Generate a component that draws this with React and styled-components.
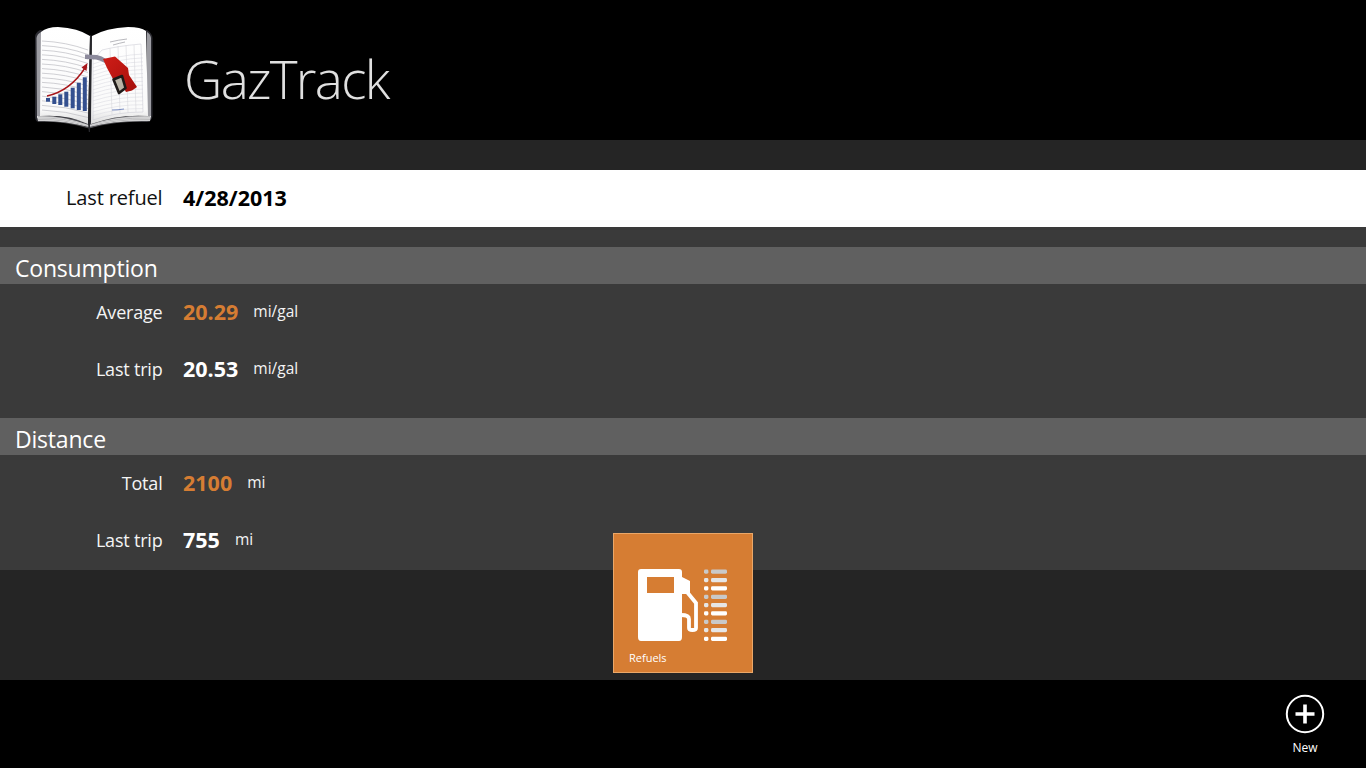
import styled, { createGlobalStyle } from 'styled-components';

const GlobalStyle = createGlobalStyle`
    html, body {
        margin: 0;
        padding: 0;
        background: #000000;
    }
    * {
        box-sizing: border-box;
    }
`;

const consumption = [
    { label: 'Average', value: '20.29', unit: 'mi/gal', accent: true, unitGap: 15 },
    { label: 'Last trip', value: '20.53', unit: 'mi/gal', unitGap: 15 },
];

const distance = [
    { label: 'Total', value: '2100', unit: 'mi', accent: true, unitGap: 15 },
    { label: 'Last trip', value: '755', unit: 'mi', unitGap: 15 },
];

function BookLogo() {
    const leftLines = Array.from({ length: 16 }, (_, i) => 41 + i * 4.6);
    const rightLines = Array.from({ length: 15 }, (_, i) => 60 + i * 3.8);
    const stack = [116.5, 118, 119.5, 121];
    const bars = [
        [46, 98, 3.7],
        [52.3, 96.7, 7.3],
        [58.3, 94.3, 10.7],
        [64.3, 91.7, 15],
        [70.7, 87.7, 20.6],
        [76.8, 82.7, 27.3],
        [82.8, 77.3, 33.7],
    ];
    return (
        <svg width="128" height="112" viewBox="30 24 128 112">
            <defs>
                <linearGradient id="pageTop" x1="0" y1="0" x2="0" y2="1">
                    <stop offset="0" stopColor="#ffffff" />
                    <stop offset="0.85" stopColor="#fafafa" />
                    <stop offset="1" stopColor="#dcdcdc" />
                </linearGradient>
                <linearGradient id="nozzle" x1="0" y1="0" x2="1" y2="1">
                    <stop offset="0" stopColor="#cf1d17" />
                    <stop offset="1" stopColor="#a50f0b" />
                </linearGradient>
            </defs>
            <path
                d="M35 37 Q35 33 40 30 L90 37 L147 30 Q152 33 152.500 38 L152.500 116 Q152 121 147 122 Q115 120 90 128 Q62 120 38 122 Q35 121 35 116 Z"
                fill="#2a2a30"
            />
            <path d="M36.500 38 Q37 34 41 32 L41 118 L37 118 Z M147 32 Q150.500 34 151 38 L151 117 L147 118 Z" fill="#9c9ca2" />
            <path d="M37 116 Q62 115 89 125 Q116 115 151 116 L150 121 Q116 120 89 127 Q62 120 38 121 Z" fill="#e8e8e8" />
            {stack.map((y) => (
                <path key={y} d={`M38 ${y} Q64 ${y - 0.5} 89 ${y + 7} Q114 ${y - 0.5} 150 ${y}`} stroke="#8e8e92" strokeWidth="0.5" fill="none" />
            ))}
            <path d="M41 32 Q47 27 58 27 Q78 28 90 36 L88 124 Q68 114 40 116 Z" fill="url(#pageTop)" />
            <path d="M92 36 Q106 28 128 27 Q141 27 146 31 L148 116 Q118 114 91 124 Z" fill="url(#pageTop)" />
            {leftLines.map((y, i) => (
                <path key={y} d={`M42 ${y} Q66 ${y + 1} 88 ${y + 9 - i * 0.1}`} stroke="#bcbcc2" strokeWidth="0.7" fill="none" />
            ))}
            {rightLines.map((y, i) => (
                <path key={y} d={`M93 ${y + 4 - i * 0.12} Q118 ${y - 5} 143 ${y - 6 + i * 0.1}`} stroke="#dcdce2" strokeWidth="0.6" fill="none" />
            ))}
            <path d="M102 50 Q118 46 141 44 L143 112 Q116 112 93 120 L93 60 Z" fill="none" stroke="#cfcfd6" strokeWidth="0.6" />
            <path d="M110 48 L112 115 M118 46 L120 114 M126 45 L128 113 M134 45 L136 112" stroke="#d6d6dc" strokeWidth="0.6" fill="none" />
            <path d="M110 42 Q118 40 127 39 M113 45 Q120 43 125 42" stroke="#9a9aa0" strokeWidth="0.7" fill="none" />
            <path d="M112 110 Q118 110 124 109" stroke="#6d82bd" strokeWidth="0.9" fill="none" />
            {bars.map(([x, y, h]) => (
                <rect key={x} x={x} y={y} width="4" height={h} fill="#34508f" />
            ))}
            <path d="M47 96 Q70 91 85 68" stroke="#a8161a" strokeWidth="1.4" fill="none" />
            <path d="M87.500 63 L86.500 71 L81.500 67.500 Z" fill="#a8161a" />
            <path d="M90 35 L91.800 36 L90 124 L90 132 L88.800 132 L88 123 Z" fill="#26262a" />
            <path d="M85 54.500 L97 55 Q102 56 106 59 L105 63 Q100 60 96 59.500 L85 59 Z" fill="#8c8a9c" />
            <path
                d="M103 59 L115 56.500 L128 68 L129 75 L137 87 L132 90.500 L126 92 L122 85 L121 76 L113 79 L107 68 Z"
                fill="url(#nozzle)"
            />
            <path d="M113.500 79.500 L122 76 L125.500 88 L119 93 Z" fill="#b9b3a6" stroke="#1e1a18" strokeWidth="2.6" strokeLinejoin="round" />
        </svg>
    );
}

function RefuelsIcon() {
    const rows = [571.5, 580, 588.3, 596.7, 605, 613.3, 621.7, 630, 638.7];
    const tones = ['#c9c9c9', '#e6e6e6', '#ffffff'];
    return (
        <svg width="90" height="73" viewBox="638 569 90 73">
            <path
                d="M641 569 H679 Q682 569 682 572 V637 Q682 641 679 641 H641 Q638 641 638 637 V572 Q638 569 641 569 Z M647 577 V593 H674 V577 Z"
                fill="#ffffff"
                fillRule="evenodd"
            />
            <path d="M681 576.500 L690 581 V594 H681 Z" fill="#ffffff" />
            <path
                d="M687 592 L696 603 V628 Q696 630 692.500 630 Q689 630 689 628 V619 Q689 615 681 615"
                fill="none"
                stroke="#ffffff"
                strokeWidth="3.8"
            />
            {rows.map((y, i) => (
                <g key={y} fill={tones[i % 3]}>
                    <rect x="704" y={y - 2} width="4.4" height="4.2" rx="1.4" />
                    <rect x="711" y={y - 2} width="16" height="4.2" rx="1.4" />
                </g>
            ))}
        </svg>
    );
}

function StatRow({ label, value, unit, accent, unitGap }) {
    return (
        <Row>
            <RowLabel>{label}</RowLabel>
            <RowValue $accent={accent}>{value}</RowValue>
            <RowUnit $gap={unitGap}>{unit}</RowUnit>
        </Row>
    );
}

function App() {
    return (
        <Page>
            <GlobalStyle />
            <Header>
                <BookLogo />
                <Title>GazTrack</Title>
            </Header>
            <Content>
                <LastRefuel>
                    <RowLabel $dark>Last refuel</RowLabel>
                    <RefuelDate>4/28/2013</RefuelDate>
                </LastRefuel>
                <Stats>
                    <SectionHead>Consumption</SectionHead>
                    <SectionBody $extra={20}>
                        {consumption.map((row) => (
                            <StatRow key={row.label} {...row} />
                        ))}
                    </SectionBody>
                    <SectionHead>Distance</SectionHead>
                    <SectionBody $extra={1}>
                        {distance.map((row) => (
                            <StatRow key={row.label} {...row} />
                        ))}
                    </SectionBody>
                </Stats>
                <TileArea>
                    <Tile>
                        <RefuelsIcon />
                        <TileLabel>Refuels</TileLabel>
                    </Tile>
                </TileArea>
            </Content>
            <Footer>
                <AppBarButton>
                    <svg width="40" height="40" viewBox="0 0 40 40">
                        <circle cx="20" cy="20" r="18.2" fill="none" stroke="#ffffff" strokeWidth="2" />
                        <path d="M20 10.500 V29.500 M10.500 20 H29.500" stroke="#ffffff" strokeWidth="3.6" fill="none" />
                    </svg>
                    <AppBarLabel>New</AppBarLabel>
                </AppBarButton>
            </Footer>
        </Page>
    );
}

const Page = styled.div`
    width: 1366px;
    height: 768px;
    overflow: hidden;
    display: flex;
    flex-direction: column;
    background: #000000;
    font-family: 'Open Sans', 'Noto Sans', sans-serif;
    color: #ffffff;
`;

const Header = styled.header`
    height: 140px;
    flex: none;
    display: flex;
    align-items: flex-start;
    padding: 24px 0 0 30px;
    background: #000000;
`;

const Title = styled.h1`
    margin: 17px 0 0 26px;
    font-size: 53px;
    line-height: 76px;
    font-weight: 300;
    letter-spacing: -1.7px;
    color: #e0e0e0;
`;

const Content = styled.main`
    flex: 1;
    display: flex;
    flex-direction: column;
    padding-top: 30px;
    background: #252525;
`;

const LastRefuel = styled.div`
    height: 57px;
    flex: none;
    padding-bottom: 2px;
    display: flex;
    align-items: center;
    background: #ffffff;
`;

const Stats = styled.div`
    flex: none;
    padding-top: 20px;
    background: #3a3a3a;
`;

const SectionHead = styled.h2`
    height: 37px;
    margin: 0;
    padding-left: 15px;
    font-size: 23px;
    line-height: 42px;
    font-weight: 400;
    letter-spacing: -0.2px;
    background: #606060;
    color: #ffffff;
`;

const SectionBody = styled.div`
    padding-bottom: ${(props) => props.$extra}px;
`;

const Row = styled.div`
    height: 57px;
    padding-bottom: 2px;
    display: flex;
    align-items: center;
`;

const RowLabel = styled.span`
    width: 162.5px;
    margin-right: 0.5px;
    flex: none;
    text-align: right;
    font-size: ${(props) => (props.$dark ? '20px' : '18px')};
    letter-spacing: ${(props) => (props.$dark ? '-0.15px' : '-0.2px')};
    color: ${(props) => (props.$dark ? '#111111' : '#f4f4f4')};
`;

const RowValue = styled.span`
    margin-left: 20px;
    font-size: 21.5px;
    font-weight: 700;
    color: ${(props) => (props.$accent ? '#d67d33' : '#ffffff')};
`;

const RefuelDate = styled(RowValue)`
    color: #000000;
`;

const RowUnit = styled.span`
    margin-left: ${(props) => props.$gap}px;
    margin-top: -1px;
    font-size: 15.5px;
    color: #f4f4f4;
`;

const TileArea = styled.div`
    flex: 1;
    display: flex;
    justify-content: center;
`;

const Tile = styled.button`
    width: 140px;
    height: 140px;
    margin-top: -37px;
    padding: 35px 0 0 24px;
    display: flex;
    flex-direction: column;
    align-items: flex-start;
    border: 1px solid #eaa768;
    background: #d67d33;
    color: #ffffff;
    font-family: inherit;
`;

const TileLabel = styled.span`
    margin: 8px 0 0 -9px;
    font-size: 11px;
    line-height: 16px;
`;

const Footer = styled.footer`
    height: 88px;
    flex: none;
    display: flex;
    justify-content: flex-end;
    padding: 14px 21px 0 0;
    background: #000000;
`;

const AppBarButton = styled.div`
    width: 80px;
    display: flex;
    flex-direction: column;
    align-items: center;
`;

const AppBarLabel = styled.span`
    margin-top: 6px;
    font-size: 12px;
    line-height: 16px;
    color: #ffffff;
`;

export default App;
